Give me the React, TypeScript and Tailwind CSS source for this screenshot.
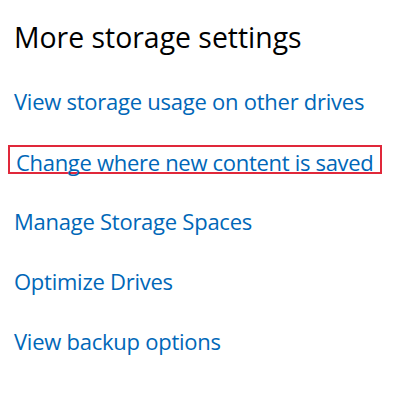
import React from 'react';

const links = [
  'View storage usage on other drives',
  'Change where new content is saved',
  'Manage Storage Spaces',
  'Optimize Drives',
  'View backup options',
];

export default function App() {
  return (
    <div
      className="w-[415px] h-[394px] bg-white pl-[14px] pt-[18px] overflow-hidden"
      style={{ fontFamily: '"Open Sans", "Noto Sans", sans-serif' }}
    >
      {/* Section heading */}
      <h2 className="text-[28.4px] leading-[38px] font-normal text-black">More storage settings</h2>

      <div className="mt-[30px] flex flex-col">
        {links.map((label, i) =>
          i === 1 ? (
            <div key={label} className="h-[60px]">
              <div className="-mt-[1.5px] -ml-[6px] w-[374px] h-[29px] border-2 border-[#e0283a] pl-[6px]">
                <a href="#" className="block text-[22px] leading-[30px] tracking-[-0.3px] text-[#0067b8] whitespace-nowrap">
                  {label}
                </a>
              </div>
            </div>
          ) : (
            <div key={label} className="h-[60px]">
              <a href="#" className="block text-[22px] leading-[30px] tracking-[-0.25px] text-[#0067b8] whitespace-nowrap">
                {label}
              </a>
            </div>
          )
        )}
      </div>
    </div>
  );
}
